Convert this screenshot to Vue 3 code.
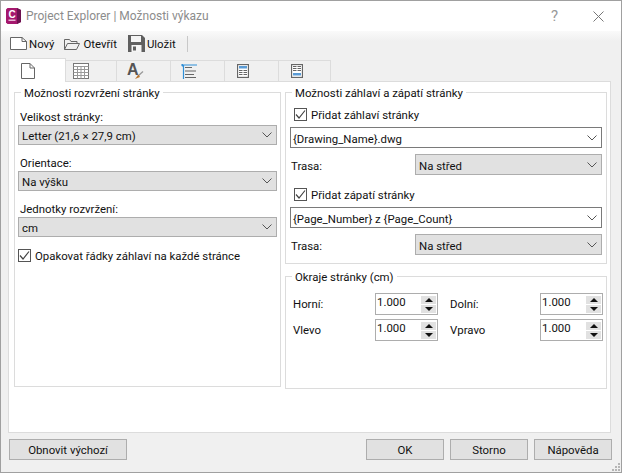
<script setup>
const layoutFields = [
  { label: 'Velikost stránky:', value: 'Letter (21,6 × 27,9 cm)' },
  { label: 'Orientace:', value: 'Na výšku' },
  { label: 'Jednotky rozvržení:', value: 'cm' },
]
const margins = ['Horní:', 'Dolní:', 'Vlevo', 'Vpravo']
const tabs = [
  { id: 'page', width: 58, pad: 12 },
  { id: 'table', width: 51, pad: 7 },
  { id: 'font', width: 54, pad: 10 },
  { id: 'list', width: 54, pad: 10 },
  { id: 'head', width: 54, pad: 12 },
  { id: 'foot', width: 52, pad: 12 },
]
</script>

<template>
  <div class="window">
    <header class="titlebar">
      <svg class="logo" width="15" height="16" viewBox="0 0 15 16">
        <path d="M0 1.500 1.500 0H11l4 2v12l-4 2H1.500L0 14.500z" fill="#a5186e" />
        <path d="M11 0l4 2v12l-4 2z" fill="#6d1150" />
        <text x="6" y="9.500" fill="#fff" font-size="10" font-weight="700" font-family="Liberation Sans" text-anchor="middle">C</text>
        <rect x="2.500" y="11.500" width="7" height="1.500" fill="#e8b8d6" />
      </svg>
      <span class="title">Project Explorer | Možnosti výkazu</span>
      <span class="help">?</span>
      <svg class="close" width="11" height="11" viewBox="0 0 11 11">
        <path d="M.5.5l10 10M10.500.5l-10 10" stroke="#777" fill="none" />
      </svg>
    </header>

    <div class="toolbar">
      <button class="tool tool-new">
        <svg width="17" height="13" viewBox="0 0 17 13">
          <path d="M.5.5h11.500l4.500 4v8H.5z" fill="#fff" stroke="#666" />
          <path d="M12 .5v4h4.500" fill="none" stroke="#666" />
        </svg>
        <span>Nový</span>
      </button>
      <button class="tool tool-open">
        <svg width="16" height="12" viewBox="0 0 16 12">
          <path d="M.5 11.500V1.500h5l1.500 2h6v2" fill="none" stroke="#666" />
          <path d="M.5 11.500l3-6h12l-3 6z" fill="none" stroke="#666" />
        </svg>
        <span>Otevřít</span>
      </button>
      <button class="tool tool-save">
        <svg width="17" height="17" viewBox="0 0 17 17">
          <path d="M0 0h14l3 3v14H0z" fill="#5f5f5f" />
          <rect x="3" y="1" width="10" height="6" fill="#f4f4f4" />
          <rect x="3.500" y="10" width="10" height="7" fill="#f4f4f4" />
          <rect x="5" y="11.500" width="3" height="4" fill="#5f5f5f" />
        </svg>
        <span>Uložit</span>
      </button>
      <span class="tool-sep"></span>
    </div>

    <div class="tabs">
      <div
        v-for="(tab, i) in tabs"
        :key="tab.id"
        class="tab"
        :class="{ active: i === 0 }"
        :style="{ width: tab.width + 'px', paddingLeft: tab.pad + 'px' }"
      >
        <svg v-if="tab.id === 'page'" width="14" height="16" viewBox="0 0 14 16">
          <path d="M.5.5h8.500l4.500 4.500v10.500H.5z" fill="#fff" stroke="#666" />
          <path d="M9 .5V5h4.500" fill="none" stroke="#666" />
        </svg>
        <svg v-else-if="tab.id === 'table'" width="16" height="17" viewBox="0 0 16 17">
          <rect x=".5" y=".5" width="15" height="15" fill="#fff" stroke="#777" />
          <path d="M.5 3.500h15M.5 6.500h15M.5 9.500h15M.5 12.500h15M4.500 3.500v12M8 3.500v12M11.500 3.500v12" stroke="#999" fill="none" />
        </svg>
        <svg v-else-if="tab.id === 'font'" width="17" height="18" viewBox="0 0 17 18">
          <text x="0" y="13" fill="#555" font-size="16" font-weight="700" font-family="Liberation Sans">A</text>
          <path d="M16 9.500 11 14" stroke="#999" stroke-width="1.300" />
          <path d="M11.500 12.500 8 17l5-2z" fill="#b8742c" />
        </svg>
        <svg v-else-if="tab.id === 'list'" width="16" height="15" viewBox="0 0 16 15">
          <path d="M2.500 1v14M2 1h14M0 1h3.500M1.500 0v2.500" stroke="#2f8fd8" fill="none" stroke-width="1.200" />
          <path d="M4 3.500h7M4 7h11M4 10.500h9M4 13.500h11" stroke="#666" fill="none" />
        </svg>
        <svg v-else-if="tab.id === 'head'" width="12" height="14" viewBox="0 0 12 14">
          <rect x=".5" y=".5" width="11" height="13" fill="#fff" stroke="#666" stroke-width="1.300" />
          <rect x="2" y="2" width="8" height="2.500" fill="#5a9bd5" />
          <path d="M2 6.500h3.500M6.500 6.500h3.500M2 8.500h3.500M6.500 8.500h3.500M2 10.500h3.500M6.500 10.500h3.500" stroke="#666" fill="none" />
        </svg>
        <svg v-else width="12" height="14" viewBox="0 0 12 14">
          <rect x=".5" y=".5" width="11" height="13" fill="#fff" stroke="#666" stroke-width="1.300" />
          <path d="M2 2.500h3.500M6.500 2.500h3.500M2 4.500h3.500M6.500 4.500h3.500M2 6.500h3.500M6.500 6.500h3.500" stroke="#666" fill="none" />
          <rect x="2" y="9" width="8" height="2.500" fill="#5a9bd5" />
        </svg>
      </div>
    </div>

    <main class="panel">
      <fieldset class="group group-layout">
        <legend>Možnosti rozvržení stránky</legend>
        <div v-for="field in layoutFields" :key="field.label" class="field">
          <div class="field-label">{{ field.label }}</div>
          <div class="select gray">
            <span>{{ field.value }}</span>
            <svg class="chev" width="10" height="6" viewBox="0 0 10 6"><path d="M.5.500 5 5 9.500.5" fill="none" stroke="#555" /></svg>
          </div>
        </div>
        <label class="check repeat">
          <span class="box"><svg width="11" height="11" viewBox="0 0 11 11"><path d="M1 5.500 4 9l6-7.500" fill="none" stroke="#444" stroke-width="1.200" /></svg></span>
          <span>Opakovat řádky záhlaví na každé stránce</span>
        </label>
      </fieldset>

      <div class="right">
        <fieldset class="group group-header">
          <legend>Možnosti záhlaví a zápatí stránky</legend>
          <label class="check indent">
            <span class="box"><svg width="11" height="11" viewBox="0 0 11 11"><path d="M1 5.500 4 9l6-7.500" fill="none" stroke="#444" stroke-width="1.200" /></svg></span>
            <span>Přidat záhlaví stránky</span>
          </label>
          <div class="select white combo">
            <span>{Drawing_Name}.dwg</span>
            <svg class="chev" width="10" height="6" viewBox="0 0 10 6"><path d="M.5.500 5 5 9.500.5" fill="none" stroke="#555" /></svg>
          </div>
          <div class="route">
            <span>Trasa:</span>
            <div class="select gray route-select">
              <span>Na střed</span>
              <svg class="chev" width="10" height="6" viewBox="0 0 10 6"><path d="M.5.500 5 5 9.500.5" fill="none" stroke="#555" /></svg>
            </div>
          </div>
          <label class="check indent second">
            <span class="box"><svg width="11" height="11" viewBox="0 0 11 11"><path d="M1 5.500 4 9l6-7.500" fill="none" stroke="#444" stroke-width="1.200" /></svg></span>
            <span>Přidat zápatí stránky</span>
          </label>
          <div class="select white combo">
            <span>{Page_Number} z {Page_Count}</span>
            <svg class="chev" width="10" height="6" viewBox="0 0 10 6"><path d="M.5.500 5 5 9.500.5" fill="none" stroke="#555" /></svg>
          </div>
          <div class="route">
            <span>Trasa:</span>
            <div class="select gray route-select">
              <span>Na střed</span>
              <svg class="chev" width="10" height="6" viewBox="0 0 10 6"><path d="M.5.500 5 5 9.500.5" fill="none" stroke="#555" /></svg>
            </div>
          </div>
        </fieldset>

        <fieldset class="group group-margins">
          <legend>Okraje stránky (cm)</legend>
          <div class="margin-grid">
            <template v-for="m in margins" :key="m">
              <span class="margin-label">{{ m }}</span>
              <div class="spin">
                <span class="spin-value">1.000</span>
                <div class="spin-buttons">
                  <span class="spin-btn"><i class="arrow up"></i></span>
                  <span class="spin-btn"><i class="arrow down"></i></span>
                </div>
              </div>
            </template>
          </div>
        </fieldset>
      </div>
    </main>

    <footer class="footer">
      <button class="btn btn-reset">Obnovit výchozí</button>
      <span class="spacer"></span>
      <button class="btn">OK</button>
      <button class="btn">Storno</button>
      <button class="btn">Nápověda</button>
    </footer>
    <svg class="grip" width="9" height="9" viewBox="0 0 9 9">
      <path d="M6 0h2v2H6zM3 3h2v2H3zM6 3h2v2H6zM0 6h2v2H0zM3 6h2v2H3zM6 6h2v2H6z" fill="#b5b5b5" />
    </svg>
  </div>
</template>

<style>
html, body { margin: 0; background: #fff; }
</style>

<style scoped>
.window {
  position: relative;
  box-sizing: border-box;
  width: 622px;
  height: 473px;
  border: 1px solid #a0a0a0;
  background: #f0f0f0;
  display: flex;
  flex-direction: column;
  font: 11.4px/16px Roboto, sans-serif;
  color: #111;
  overflow: hidden;
}
.titlebar {
  height: 30px;
  flex: none;
  background: #fff;
  display: flex;
  align-items: center;
  padding-left: 5px;
}
.logo { flex: none; }
.title { margin-left: 5px; color: #8c8c8c; font-size: 12px; }
.help {
  margin-left: auto;
  color: #999;
  font-size: 15px;
  margin-right: 35px;
}
.close { margin-right: 17px; }
.toolbar {
  box-sizing: border-box;
  height: 27px;
  flex: none;
  display: flex;
  align-items: center;
  padding: 0 0 2px 9px;
  background: linear-gradient(#fafafa, #f0f0f0 10px);
}
.tool {
  border: 0;
  padding: 0;
  background: none;
  font: inherit;
  color: inherit;
  display: flex;
  align-items: center;
  gap: 2px;
}
.tool-open { margin-left: 10px; gap: 3px; }
.tool-save { margin-left: 11px; gap: 2px; }
.tool-sep {
  width: 1px;
  height: 16px;
  margin-left: 11px;
  background: #c8c8c8;
}
.tabs {
  height: 23px;
  flex: none;
  display: flex;
  align-items: flex-end;
  padding-left: 7px;
}
.tab {
  box-sizing: border-box;
  height: 21px;
  border: 1px solid #dcdcdc;
  border-left: 0;
  border-bottom: 0;
  display: flex;
  align-items: center;
}
.tab.active {
  height: 24px;
  margin-bottom: -1px;
  background: #fff;
  border-left: 1px solid #dcdcdc;
  position: relative;
  z-index: 1;
  padding-top: 1px;
}
.panel {
  box-sizing: border-box;
  height: 352px;
  flex: none;
  margin: 0 10px 0 7px;
  padding: 2px 2px 0 5px;
  border: 1px solid #dcdcdc;
  background: #fff;
  display: flex;
  gap: 4px;
}
.group {
  box-sizing: border-box;
  min-width: 0;
  margin: 0;
  border: 1px solid #dcdcdc;
}
.group legend {
  padding: 0 3px;
  height: 16px;
  line-height: 18px;
}
.group-layout legend { margin-left: 3px; }
.group-header legend { margin-left: 2px; }
.group-margins legend { margin-left: -1px; }
.group-layout {
  width: 267px;
  height: 303px;
  padding: 9px 3px 0;
}
.field-label { height: 16px; line-height: 17px; padding-left: 2px; }
.field + .field { margin-top: 10px; }
.select {
  box-sizing: border-box;
  height: 20px;
  display: flex;
  align-items: center;
  justify-content: space-between;
  padding: 0 4px 0 3px;
  border: 1px solid #adadad;
}
.select > span { padding-top: 2px; }
.select.gray { background: #e1e1e1; }
.select.white { background: #fff; border-color: #7a7a7a; }
.select.combo { height: 21px; margin-top: 6px; padding-left: 2px; }
.chev { flex: none; }
.check {
  display: flex;
  align-items: center;
  gap: 4px;
  height: 13px;
}
.repeat { margin-top: 12px; }
.indent { margin-left: 4px; }
.box {
  box-sizing: border-box;
  width: 13px;
  height: 13px;
  flex: none;
  border: 1px solid #555;
  background: #fff;
  display: flex;
}
.right {
  display: flex;
  flex-direction: column;
  gap: 4px;
}
.group-header {
  width: 322px;
  height: 180px;
  padding: 8px 4px 0;
}
.route {
  display: flex;
  align-items: center;
  justify-content: space-between;
  height: 21px;
  margin-top: 6px;
  padding-left: 1px;
}
.route > span { padding-top: 2px; }
.route-select { width: 187px; height: 21px; }
.second { margin-top: 13px; }
.group-margins {
  width: 322px;
  height: 121px;
  padding: 9px 0 0 7px;
}
.margin-grid {
  display: grid;
  grid-template-columns: 82px 63px 102px 63px;
  row-gap: 4px;
  align-items: center;
}
.margin-grid .margin-label:nth-child(3),
.margin-grid .margin-label:nth-child(7) { padding-left: 12px; }
.spin {
  box-sizing: border-box;
  height: 22px;
  border: 1px solid #adadad;
  background: #fff;
  display: flex;
  justify-content: space-between;
  padding-left: 1px;
}
.spin-value { line-height: 16px; }
.spin-buttons {
  display: flex;
  flex-direction: column;
  gap: 1px;
  margin: 2px 1px 0 0;
}
.spin-btn {
  width: 15px;
  height: 8px;
  background: #e1e1e1;
  display: flex;
  align-items: center;
  justify-content: center;
}
.arrow {
  width: 0;
  height: 0;
  border-left: 4px solid transparent;
  border-right: 4px solid transparent;
}
.arrow.up { border-bottom: 4px solid #111; }
.arrow.down { border-top: 4px solid #111; }
.footer {
  display: flex;
  gap: 6px;
  margin-top: 6px;
  padding: 0 9px 0 8px;
}
.spacer { flex: 1; }
.btn {
  box-sizing: border-box;
  width: 78px;
  height: 21px;
  padding: 0;
  border: 1px solid #adadad;
  background: #e1e1e1;
  font: inherit;
  color: inherit;
}
.btn-reset { width: 118px; }
.grip {
  position: absolute;
  right: 0;
  bottom: 0;
}
</style>
